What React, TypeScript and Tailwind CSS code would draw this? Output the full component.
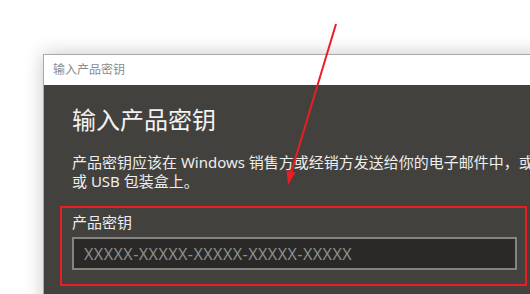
import React from "react";

const uiFont = {
  fontFamily: '"Segoe UI", "Noto Sans", "Noto Sans CJK SC", sans-serif',
};

function Arrow() {
  return (
    <svg className="pointer-events-none absolute inset-0" width="530" height="294" viewBox="0 0 530 294">
      <line x1="336" y1="24" x2="291" y2="173" stroke="#ec1c24" strokeWidth="2" />
      <polygon points="288,185 295.5,172.5 286.5,170" fill="#ec1c24" />
    </svg>
  );
}

export default function App() {
  return (
    <div className="relative h-[294px] w-[530px] overflow-hidden bg-white" style={uiFont}>
      <div className="ml-[43px] mt-[54px] w-[600px] border border-[#a9a9a9] shadow-[0_0_18px_rgba(0,0,0,0.22)]">
        <div className="flex h-[30px] items-center bg-white pl-[9px] text-[12px] text-[#8c8c8c]">
          输入产品密钥
        </div>
        <div className="h-[240px] bg-[#43413d] pl-[28px] pt-[19px]">
          <h1 className="text-[24px] leading-[32px] font-normal text-[#f2f2f2]">输入产品密钥</h1>
          <p className="mt-[17px] whitespace-nowrap text-[15px] leading-[19px] text-[#eeeeee]">
            产品密钥应该在 Windows 销售方或经销方发送给你的电子邮件中，或
            <br />
            或 USB 包装盒上。
          </p>
          <div className="-ml-[12px] mt-[15px] w-[467px] border-2 border-[#ec1c24] pb-[14px] pl-[10px] pr-[8px] pt-[4px]">
            <div className="text-[15px] leading-[20px] text-[#eeeeee]">产品密钥</div>
            <div className="mt-[5px] flex h-[33px] items-center border-2 border-[#858481] bg-[#2a2927] pl-[10px] text-[16px] tracking-[0.45px] text-[#8e8e8e]">
              XXXXX-XXXXX-XXXXX-XXXXX-XXXXX
            </div>
          </div>
        </div>
      </div>
      <Arrow />
    </div>
  );
}
